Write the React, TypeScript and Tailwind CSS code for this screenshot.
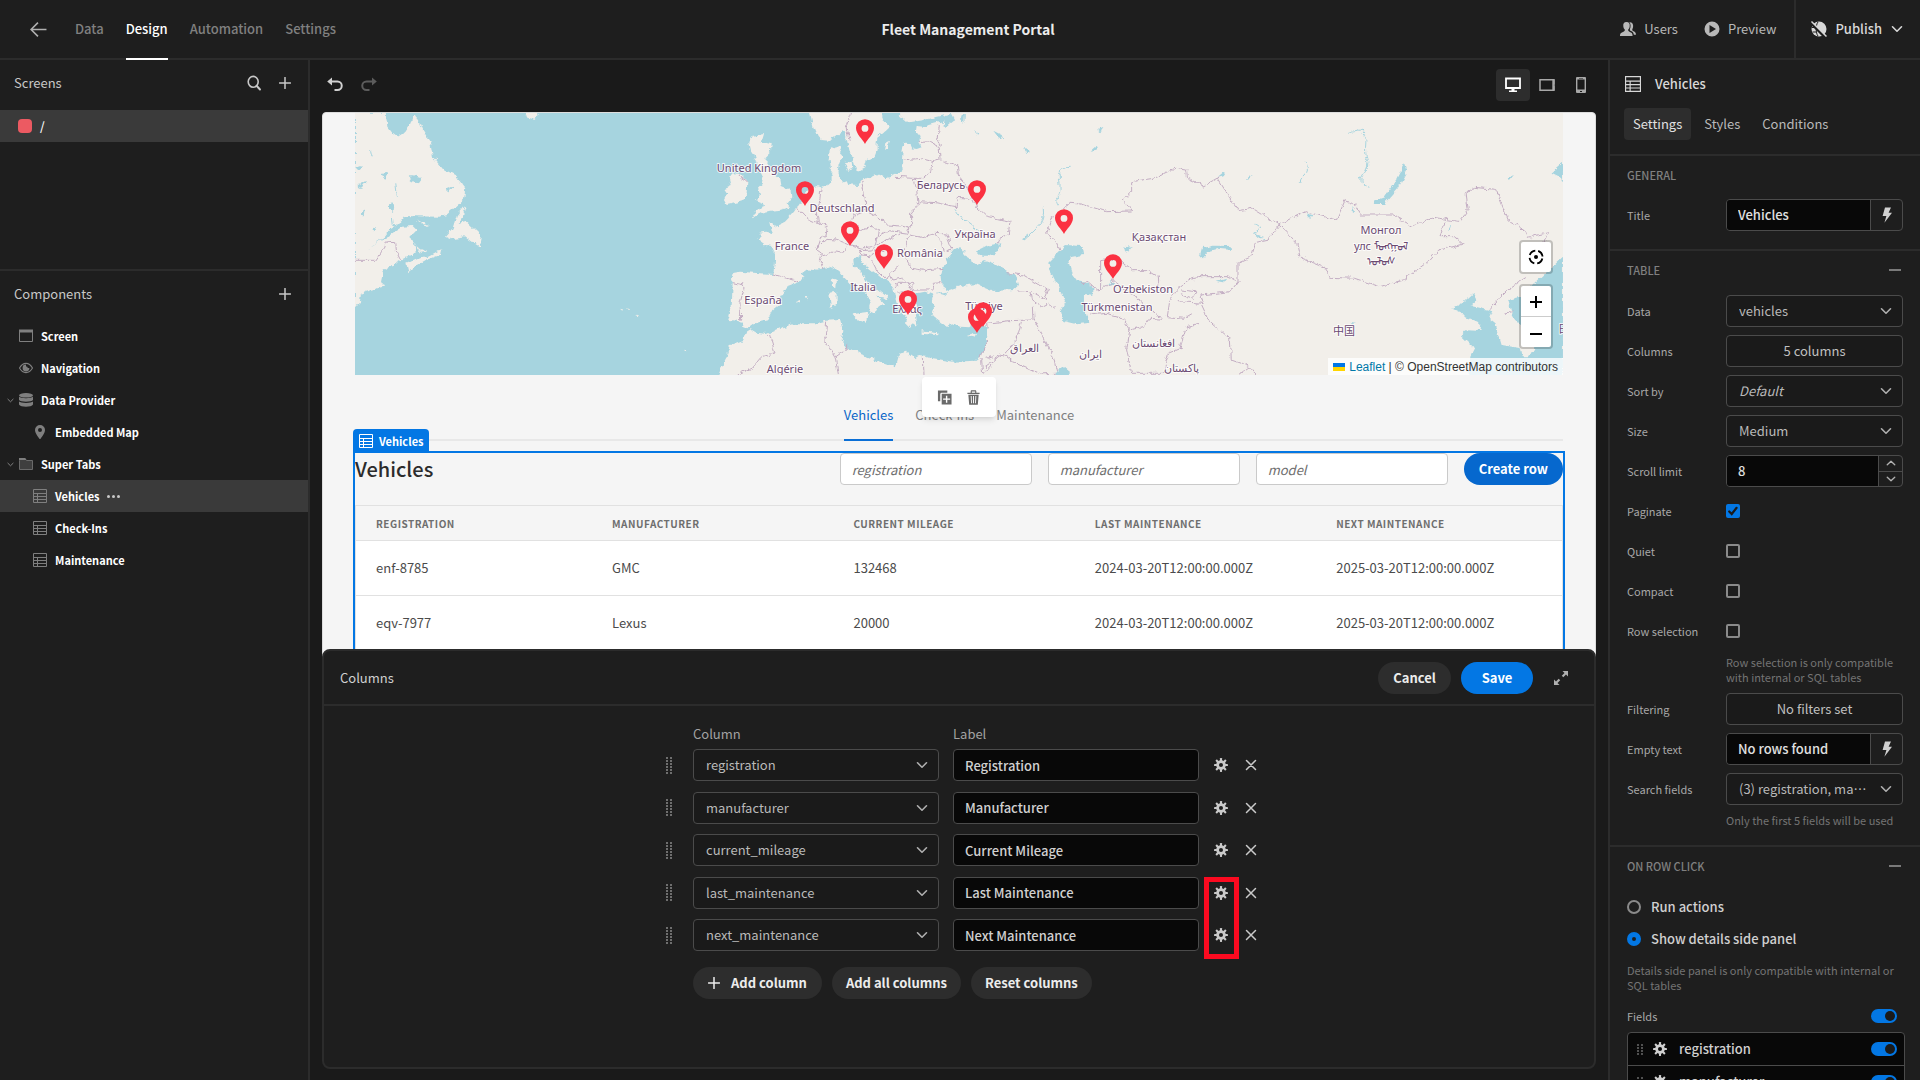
import { useState } from "react";
import type { ReactNode } from "react";
import clsx from "clsx";

interface IconProps {
  className?: string;
}

function Svg({ className, children, box = 16 }: IconProps & { children: ReactNode; box?: number }) {
  return (
    <svg viewBox={`0 0 ${box} ${box}`} className={clsx("shrink-0", className)} fill="currentColor" aria-hidden="true">
      {children}
    </svg>
  );
}

const stroke = { fill: "none", stroke: "currentColor" };

function ArrowLeftIcon({ className }: IconProps) {
  return (
    <Svg className={className}>
      <path d="M15.5 8H1.2M7.5 1.5L1 8l6.5 6.5" {...stroke} strokeWidth={1.5} />
    </Svg>
  );
}

function SearchIcon({ className }: IconProps) {
  return (
    <Svg className={className}>
      <ellipse cx={7.2} cy={6.8} rx={5} ry={5.4} {...stroke} strokeWidth={1.6} />
      <path d="M10.8 11L14 14.5" {...stroke} strokeWidth={2} strokeLinecap="round" />
    </Svg>
  );
}

function PlusIcon({ className }: IconProps) {
  return (
    <Svg className={className} box={12}>
      <path d="M6 0.5V11.5M0.5 6H11.5" {...stroke} strokeWidth={1.5} strokeLinecap="round" />
    </Svg>
  );
}

function ChevronIcon({ className }: IconProps) {
  return (
    <Svg className={className} box={12}>
      <path d="M1.5 3.8L6 8.2L10.5 3.8" {...stroke} strokeWidth={1.6} strokeLinecap="round" strokeLinejoin="round" />
    </Svg>
  );
}

function TableIcon({ className }: IconProps) {
  return (
    <Svg className={className} box={14}>
      <path d="M0.5 0.5H13.5V13.5H0.5ZM0.5 4.5H13.5M0.5 7.5H13.5M0.5 10.5H13.5M4.5 4.5V13.5" {...stroke} />
    </Svg>
  );
}

function ScreenIcon({ className }: IconProps) {
  return (
    <Svg className={className} box={14}>
      <path d="M0.5 1.5H13.5V12.5H0.5Z" {...stroke} />
      <path d="M0 0.5H14V3.5H0Z" />
    </Svg>
  );
}

function EyeIcon({ className }: IconProps) {
  return (
    <Svg className={className} box={14}>
      <path d="M0.5 7C2.5 3.5 4.6 2.4 7 2.4S11.5 3.5 13.5 7C11.5 10.5 9.4 11.6 7 11.6S2.5 10.5 0.5 7Z" {...stroke} strokeWidth={1.2} />
      <path d="M7 3.6A3.4 3.4 0 1 0 10.4 7H8.6A1.6 1.6 0 0 1 7 5.4Z" />
      <circle cx={7.6} cy={6.4} r={1} />
    </Svg>
  );
}

function DataIcon({ className }: IconProps) {
  return (
    <Svg className={className} box={14}>
      <ellipse cx={7} cy={2.3} rx={7} ry={2.3} />
      <path d="M0 3.8C1.5 5.6 12.5 5.6 14 3.8V7C12.5 9.2 1.5 9.2 0 7Z" />
      <path d="M0 8.6C1.5 10.4 12.5 10.4 14 8.6V11.6C12.5 14.6 1.5 14.6 0 11.6Z" />
    </Svg>
  );
}

function PinIcon({ className }: IconProps) {
  return (
    <Svg className={className} box={14}>
      <path fillRule="evenodd" d="M7 0A5 5 0 0 0 2 5C2 8.5 7 14.5 7 14.5S12 8.5 12 5A5 5 0 0 0 7 0ZM7 3A2 2 0 1 1 7 7A2 2 0 1 1 7 3Z" />
    </Svg>
  );
}

function FolderIcon({ className }: IconProps) {
  return (
    <Svg className={className} box={14}>
      <path d="M0.5 3.5V1.5H6L7.5 3.5H13.5V12.5H0.5Z" fill="#3f3f3f" stroke="#6a6a6a" />
      <path d="M0 1H6.2L7.4 3H0Z" />
    </Svg>
  );
}

function GearIcon({ className }: IconProps) {
  return (
    <Svg className={className}>
      <circle cx={8} cy={8} r={3.9} {...stroke} strokeWidth={3.2} />
      {[0, 45, 90, 135].map((angle) => (
        <g key={angle} transform={`rotate(${angle} 8 8)`}>
          <rect x={6.8} y={0} width={2.4} height={3.5} rx={0.5} />
          <rect x={6.8} y={12.5} width={2.4} height={3.5} rx={0.5} />
        </g>
      ))}
    </Svg>
  );
}

function CrossIcon({ className }: IconProps) {
  return (
    <Svg className={className} box={12}>
      <path d="M1.5 1.5L10.5 10.5M10.5 1.5L1.5 10.5" {...stroke} strokeWidth={1.5} strokeLinecap="round" />
    </Svg>
  );
}

function BoltIcon({ className }: IconProps) {
  return (
    <Svg className={className}>
      <path d="M6 0.5H12L9.6 5.8H13L5.4 15.8L7.4 9H3.6Z" />
    </Svg>
  );
}

function UsersIcon({ className }: IconProps) {
  return (
    <Svg className={className}>
      <path d="M6.5 1C3.8 1 3 3 3.3 5.2C3.5 7 4.2 8 4.8 8.6C5 9.8 4.6 10.2 3.5 10.7C1.5 11.6 0 12 0 15H12.6C12.6 12 11.5 11.6 9.5 10.7C8.4 10.2 8 9.8 8.2 8.6C8.8 8 9.5 7 9.7 5.2C10 3 9.2 1 6.5 1Z" />
      <path d="M9.3 1.3C10.8 2.6 11 5.6 9.9 8.2C9.7 9.2 10.2 9.7 11 10.1C12.6 10.8 13.6 11.8 13.9 13.8H16C15.9 11.5 14.8 10.8 13 10C12.3 9.6 12.1 9 12.4 8.1C13.7 6 13.8 0.8 9.3 1.3Z" />
    </Svg>
  );
}

function PlayIcon({ className }: IconProps) {
  return (
    <Svg className={className}>
      <path fillRule="evenodd" d="M8 0.5A7.5 7.5 0 1 0 8 15.5A7.5 7.5 0 1 0 8 0.5ZM5.5 4L12 8L5.5 12Z" />
    </Svg>
  );
}

function GlobeStrikeIcon({ className }: IconProps) {
  return (
    <Svg className={className} box={18}>
      <circle cx={9} cy={9} r={7.5} />
      <path d="M8 2C5.6 5 5.6 13 8 16M2 7.5H5M2.5 12H6" fill="none" stroke="#1e1e1e" />
      <path d="M0.5 2.5L15.5 17.5" stroke="#1e1e1e" strokeWidth={3} />
      <path d="M1.5 1.5L16.5 16.5" stroke="currentColor" strokeWidth={1.5} />
    </Svg>
  );
}

function UndoIcon({ className }: IconProps) {
  return (
    <Svg className={className}>
      <path d="M3.5 4.5H10.5A4.2 4.2 0 0 1 10.5 13H7.5" {...stroke} strokeWidth={2} />
      <path d="M0.2 4.5L5 0.5V8.5Z" />
    </Svg>
  );
}

function DesktopIcon({ className }: IconProps) {
  return (
    <Svg className={className}>
      <path d="M1 1.5H15V11H1Z" {...stroke} strokeWidth={1.8} />
      <path d="M6.5 11.5H9.5V13.5H12V15H4V13.5H6.5Z" />
    </Svg>
  );
}

function TabletIcon({ className }: IconProps) {
  return (
    <Svg className={className}>
      <path d="M1 2.7H15V13.3H1Z" {...stroke} strokeWidth={1.5} />
      <path d="M13.3 3H15.5V7A1.2 1.2 0 0 0 15.5 9.2V13H13.3Z" />
    </Svg>
  );
}

function PhoneIcon({ className }: IconProps) {
  return (
    <Svg className={className}>
      <path fillRule="evenodd" d="M4 0H12A1 1 0 0 1 13 1V15A1 1 0 0 1 12 16H4A1 1 0 0 1 3 15V1A1 1 0 0 1 4 0ZM4.4 2.5V12.5H11.6V2.5ZM7 14H9V15H7ZM6 1H10V1.5H6Z" />
    </Svg>
  );
}

function DuplicateIcon({ className }: IconProps) {
  return (
    <Svg className={className}>
      <path d="M1 0.5H11V3H5A1.5 1.5 0 0 0 3.5 4.5V12H1Z" />
      <path fillRule="evenodd" d="M5 4H15.5V15.5H5ZM9.5 6V9H6.5V10.5H9.5V13.5H11V10.5H14V9H11V6Z" />
    </Svg>
  );
}

function TrashIcon({ className }: IconProps) {
  return (
    <Svg className={className}>
      <path d="M1.5 3H5V1.5C5 0.7 5.5 0.3 6 0.3H10C10.5 0.3 11 0.7 11 1.5V3H14.5V4.2H1.5ZM6.2 1.5V3H9.8V1.5Z" fillRule="evenodd" />
      <path fillRule="evenodd" d="M2.5 5H13.5L12.6 15.7H3.4ZM5 6.5L5.4 14H6.3L6 6.5ZM7.5 6.5V14H8.5V6.5ZM10 6.5L9.7 14H10.6L11 6.5Z" />
    </Svg>
  );
}

function ExpandIcon({ className }: IconProps) {
  return (
    <Svg className={className} box={14}>
      <path d="M8.5 0H14V5.500L12 3.500L9.300 6.200L7.800 4.700L10.500 2ZM5.500 14H0V8.500L2 10.500L4.700 7.800L6.200 9.300L3.500 12Z" />
    </Svg>
  );
}

function HandleIcon({ className, rows = 6 }: IconProps & { rows?: number }) {
  return (
    <div className={clsx("grid grid-cols-2 gap-x-[2px] gap-y-[1px]", className)} aria-hidden="true">
      {Array.from({ length: rows * 2 }, (_, i) => (
        <span key={i} className="size-[2px] rounded-[1px] bg-current" />
      ))}
    </div>
  );
}

// ---------------------------------------------------------------- top bar

const NAV = ["Data", "Design", "Automation", "Settings"];

function TopBar() {
  return (
    <header className="relative flex h-[60px] shrink-0 items-stretch border-b-2 border-[#2c2c2c] bg-[#1e1e1e]">
      <a href="#back" aria-label="Back to apps" className="flex items-center pr-7 pl-[30px] text-[#b0b0b0]">
        <ArrowLeftIcon className="size-[17px]" />
      </a>
      <nav className="flex gap-[22px]">
        {NAV.map((item) => (
          <a
            key={item}
            href={`#${item.toLowerCase()}`}
            className={clsx(
              "-mb-[2px] flex items-center border-b-2 text-[13px] font-medium",
              item === "Design" ? "border-white font-bold text-white" : "border-transparent text-[#808080]"
            )}
          >
            {item}
          </a>
        ))}
      </nav>
      <h1 className="pointer-events-none absolute inset-0 flex items-center justify-center pl-4 text-[14px] font-bold text-[#ececec]">
        Fleet Management Portal
      </h1>
      <div className="ml-auto flex items-stretch text-[13px] text-[#b8b8b8]">
        <button type="button" className="flex items-center gap-2 pr-[26px]">
          <UsersIcon className="size-4" />
          Users
        </button>
        <button type="button" className="flex items-center gap-2 pr-[18px]">
          <PlayIcon className="size-4" />
          Preview
        </button>
        <button type="button" className="flex items-center gap-[7px] border-l-2 border-[#2c2c2c] pr-[17px] pl-[14px] font-medium text-[#d8d8d8]">
          <GlobeStrikeIcon className="size-[18px]" />
          Publish
          <ChevronIcon className="ml-[2px] size-3" />
        </button>
      </div>
    </header>
  );
}

// ---------------------------------------------------------------- left panel

interface TreeItem {
  name: string;
  icon: (props: IconProps) => ReactNode;
  nested?: boolean;
  open?: boolean;
}

const TREE: TreeItem[] = [
  { name: "Screen", icon: ScreenIcon },
  { name: "Navigation", icon: EyeIcon },
  { name: "Data Provider", icon: DataIcon, open: true },
  { name: "Embedded Map", icon: PinIcon, nested: true },
  { name: "Super Tabs", icon: FolderIcon, open: true },
  { name: "Vehicles", icon: TableIcon, nested: true },
  { name: "Check-Ins", icon: TableIcon, nested: true },
  { name: "Maintenance", icon: TableIcon, nested: true },
];

function LeftPanel() {
  const [selected, setSelected] = useState("Vehicles");

  return (
    <aside className="flex w-[310px] shrink-0 flex-col border-r-2 border-[#2c2c2c] bg-[#1e1e1e]">
      <section className="h-[211px] shrink-0 border-b-2 border-[#2c2c2c]">
        <div className="mb-1 flex h-[46px] items-center pr-[17px] pl-[14px] text-[#c8c8c8]">
          <h2 className="flex-1 text-[13px] leading-5">Screens</h2>
          <button type="button" aria-label="Search screens" className="mr-[17px]">
            <SearchIcon className="size-4" />
          </button>
          <button type="button" aria-label="Add screen">
            <PlusIcon className="size-3" />
          </button>
        </div>
        <button type="button" className="flex h-8 w-full items-center gap-2 bg-[#3a3a3a] pl-[18px] text-xs font-medium text-white">
          <span className="size-[14px] rounded bg-[#ec5a62]" />/
        </button>
      </section>
      <section className="flex flex-col">
        <div className="mb-1 flex h-[45px] items-center pr-[17px] pl-[14px] text-[#c8c8c8]">
          <h2 className="flex-1 text-[13px] leading-5">Components</h2>
          <button type="button" aria-label="Add component">
            <PlusIcon className="size-3" />
          </button>
        </div>
        <ul>
          {TREE.map(({ name, icon: Icon, nested, open }) => (
            <li key={name} className={clsx("flex h-8 items-center", name === selected && "bg-[#3a3a3a]")}>
              <button
                type="button"
                onClick={() => setSelected(name)}
                className={clsx("flex h-full items-center text-[11px] font-bold text-white", nested ? "pl-[33px]" : "pl-[5px]")}
              >
                {!nested && (
                  <span className="flex w-[14px] text-[#8a8a8a]">{open && <ChevronIcon className="ml-[2px] size-[7px]" />}</span>
                )}
                <Icon className="size-[14px] text-[#7f7f7f]" />
                <span className="pl-2">{name}</span>
              </button>
              {name === selected && (
                <button type="button" aria-label="More actions" className="ml-2 flex gap-[2px] text-[#c8c8c8]">
                  <span className="size-[3px] rounded-full bg-current" />
                  <span className="size-[3px] rounded-full bg-current" />
                  <span className="size-[3px] rounded-full bg-current" />
                </button>
              )}
            </li>
          ))}
        </ul>
      </section>
    </aside>
  );
}

// ---------------------------------------------------------------- map

const CANADA = [
  "M83,38L156,38 160,80 172,100 185,112 200,100 215,70 222,40 235,60 245,90 262,125 268,170 290,205 320,225 345,265 343,295 325,318 300,345 285,350 200,348 190,365 165,385 145,420 112,450 165,405 195,380 220,378 230,390 215,410 222,430 230,455 210,470 190,482 150,515 145,545 152,560 110,575 97,582 95,605 83,622Z",
  "M345,315L325,345 315,385 297,410 310,418 345,412 360,425 380,440 384,415 375,395 350,365 332,372Z",
  "M228,358L262,380 245,374Z",
  "M205,490L232,474 262,466 288,448 285,465 250,482 225,500 210,517Z",
  "M225,430L240,448 255,455 240,458Z",
  "M485,38L515,38 510,60 490,52Z",
];

const EURASIA =
  "M690,0L665,35 640,42 610,50 590,48 588,62 602,78 598,95 605,115 590,120 578,118 570,100 555,98 548,120 546,150 548,180 530,192 500,205 470,192 440,205 430,208 410,225 385,222 380,210 365,215 352,190 335,190 335,215 325,225 300,232 290,228 260,240 250,265 232,290 222,305 205,325 195,335 175,345 165,350 160,338 148,340 155,370 140,365 118,368 125,380 112,385 140,405 155,408 165,430 165,455 160,492 120,490 60,485 35,490 30,510 38,520 35,590 25,630 55,632 68,648 85,655 105,640 145,630 160,600 185,580 180,560 200,530 240,515 250,500 245,490 262,478 290,482 310,478 335,468 355,480 370,500 390,520 410,535 440,550 455,575 447,605 465,610 475,590 490,580 485,570 470,560 490,562 502,570 500,560 470,535 450,520 440,510 428,490 402,470 400,445 418,438 430,460 455,480 480,500 505,515 520,535 525,560 530,580 545,605 560,625 555,640 570,655 578,640 590,648 585,620 600,600 590,580 575,562 580,552 600,548 615,545 640,555 635,575 645,590 640,620 660,635 680,650 700,640 720,650 745,652 770,632 785,640 800,650 798,690 790,720 780,745 770,752 700,755 640,745 620,738 600,735 585,745 560,725 535,735 525,770 480,755 440,740 410,720 385,718 365,690 370,665 360,630 320,632 290,640 230,640 180,655 140,672 110,668 92,658 80,665 70,690 30,705 18,745 0,780 -12,810L3300,810 3300,0Z";

const ISLANDS = [
  "M268,0L280,50 290,75 305,90 325,92 345,82 360,68 372,62 378,75 382,95 388,120 395,140 403,158 408,178 416,182 436,172 440,150 462,142 470,120 470,95 472,80 495,62 510,48 490,30 478,0Z",
  "M545,0L536,16 560,38 610,30 690,12 690,0Z",
  "M330,112L345,115 352,106 362,108 366,118 360,130 368,140 362,150 356,165 352,192 340,192 330,178 326,150Z",
  "M375,160L398,155 400,180 385,185Z",
  "M95,78L132,72 125,95 152,102 150,125 130,145 145,160 160,190 178,205 182,228 212,240 214,262 200,280 210,290 180,300 150,302 125,308 95,325 110,300 135,290 130,280 105,270 120,255 115,235 125,225 130,200 120,180 118,160 105,150 100,135 90,120 85,100Z",
  "M40,190L60,192 82,215 80,250 65,275 20,285 12,270 22,250 12,235 35,225 30,205Z",
  "M398,612L445,606 438,638 415,630Z",
  "M328,548L350,545 350,585 332,590Z",
  "M335,512L348,505 346,535 336,530Z",
  "M605,664L655,670 655,676 605,671Z",
  "M740,678L772,668 762,682Z",
  "M495,120L500,98 510,92 502,115Z",
  "M225,576L240,570 243,578 232,582ZM255,562L265,560 262,568Z",
];

const INLAND_SEAS = [
  "M720,415L702,420 685,440 672,465 662,500 665,525 685,540 720,528 770,522 820,543 880,540 897,525 890,500 860,485 820,460 795,450 775,462 755,450 745,440 730,432 735,420Z",
  "M770,425L810,405 845,400 835,425 805,440 785,440Z",
  "M1010,430L1035,405 1085,408 1090,435 1060,440 1045,455 1055,490 1070,510 1095,515 1120,535 1120,555 1095,552 1095,590 1108,635 1070,640 1030,630 1022,600 1035,575 1015,530 990,480 985,455Z",
  "M1010,785L1030,772 1050,788 1050,800 1010,800Z",
  "M650,548L685,545 675,556Z",
  "M672,15L695,12 705,30 680,50 668,45Z",
  "M720,20L735,15 733,38 722,35ZM820,62L845,75 850,88 835,82Z",
  "M1160,525L1172,510 1180,522Z",
  "M1210,412L1235,408 1220,428Z",
  "M905,385L925,370 918,388Z",
  "M765,60L775,72 768,75ZM915,112L926,120 922,135ZM1135,62L1150,48 1142,70Z",
  "M1112,125L1135,105 1130,122Z",
];

const RIVERS = [
  "M1055,172Q1012,170 1018,205T1015,260Q1005,270 1016,285",
  "M970,290Q975,330 950,355T920,385",
  "M705,295Q730,340 778,360",
];

const EAST_WATER = [
  "M1105,192L1110,212 1090,262 1055,312 1028,312 1032,302 1055,292 1085,240Z",
  "M617,470L622,445 650,437 690,438 695,450 660,446 635,455 622,475Z",
  "M1215,625L1245,605 1268,578 1277,600 1262,618 1312,633 1305,655 1320,670 1335,735 1380,745 1385,772 1400,772 1412,745 1395,700 1360,650 1350,600 1380,590 1430,530 1480,470 1480,830 1255,830 1260,770 1270,745 1237,705 1250,688 1290,690 1275,668 1250,655 1240,640Z",
  "M1453,218L1480,188 1480,250 1475,232Z",
  "M1348,232L1366,222 1352,242Z",
  "M972,665L988,668 980,672Z",
  "M655,545L680,536 672,550Z",
  "M660,230L675,215 678,225ZM725,240L748,222 735,238ZM748,400L768,408 758,412Z",
  "M870,340L885,345 878,356ZM980,318L986,330 981,342ZM1207,390L1215,374 1212,388Z",
];

const EAST_RIVERS = [
  "M970,100Q1015,80 1012,120T1015,180T1005,225T1020,262",
  "M870,188Q878,215 865,228T858,248",
  "M745,370L762,385 745,400 770,420",
];

const BORDERS = [
  "M398,0L378,50 388,95",
  "M55,190L62,205 80,215",
  "M38,518L70,525 72,535 60,580 62,632",
  "M158,492L200,505 238,515",
  "M230,292L262,325 290,338 322,350 318,375 300,385 288,420 305,432 300,455 312,480",
  "M303,232L298,285 288,300 292,340",
  "M425,215L435,260 438,300 400,315 395,330 410,345 420,360",
  "M438,300L470,318 500,345 545,348 570,355",
  "M420,360L445,352 475,355 472,380 465,405 430,415 395,405 350,390 318,388 300,405",
  "M475,380L510,362 565,370 572,345 572,310 595,285 590,240 582,205 525,202",
  "M465,405L500,390 540,372",
  "M548,150L600,145 640,155 660,150 658,110 630,95 600,98",
  "M658,45L655,85 664,108",
  "M664,150L712,168 715,195 742,232 770,290 800,318 870,335 865,375 838,385 835,400",
  "M640,155L635,185 610,205 582,205",
  "M590,275L650,278 708,290 712,265 750,268",
  "M570,375L605,382 645,370 680,372 690,400 698,420 680,425",
  "M645,372L665,400 670,425",
  "M565,378L550,420 560,450 575,475 620,482 675,478",
  "M465,410L455,420 420,422 418,438 450,440 465,420 490,425",
  "M455,450L470,480 500,508 510,490 535,470",
  "M510,490L520,510 545,505 560,515 575,540 635,540 640,520 662,518",
  "M525,530L540,520 575,520 578,545 540,550 530,545",
  "M305,430L320,440 340,425 365,430 380,408",
  "M860,488L910,495 985,540 975,570 930,545 895,543",
  "M930,545L935,570 965,590 985,580 1005,595",
  "M940,590L942,625 970,680 1000,740 1010,785",
  "M802,655L800,640 870,632 942,630",
  "M905,632L890,690 850,732 795,770",
  "M850,732L880,755 960,792 1010,790",
  "M780,745L800,690M785,748L788,795 800,780 832,745 825,738 800,745",
  "M148,672L165,728 125,740 100,770 50,795",
  "M320,635L315,690 345,740 355,795M345,740L380,715 380,700",
  "M610,740L612,795",
  "M1030,300L1050,280 1085,282 1160,305 1235,303 1210,270 1235,245 1235,215 1300,205 1365,175 1400,180 1402,205 1450,228 1500,200",
  "M1020,418L1010,395 980,370 1000,315",
  "M1083,518L1100,515 1130,540 1142,538 1142,452 1155,450",
  "M1160,450L1195,445 1240,482 1285,482 1315,500 1318,530 1345,548",
  "M1142,538L1160,530 1180,510 1215,540 1250,560 1300,605 1330,625",
  "M1108,615L1160,610 1200,620 1230,660 1270,650 1290,625 1330,628",
  "M1230,660L1220,720 1235,790 1330,790 1345,730 1380,715 1400,650 1440,640",
];

const EAST_BORDERS = [
  "M658,232L708,332 740,325 805,375 868,335 942,360 962,302 985,315 1000,345 1075,345 1120,378 1172,352 1235,365 1255,330 1250,280 1270,262 1320,268 1350,360 1385,385 1395,412 1448,398 1430,440",
  "M808,375L848,430 855,472 910,500 928,532 985,535 1045,560 1100,540 1165,480 1185,450 1243,433 1222,410 1188,410 1200,365",
  "M805,375L780,420 750,428 740,470 708,488 708,545 680,530 620,530 590,540 560,575 545,610 540,650 580,655 600,640",
  "M708,545L690,575 620,585 625,610 565,605",
  "M575,570L610,575 600,595 570,580",
  "M620,610L640,665 690,720 692,780 735,800 752,825",
  "M708,825L735,800",
  "M1305,628L1345,572 1395,530M1340,640L1358,635",
];

const LABELS: [string, number, number][] = [
  ["United Kingdom", 404, 59],
  ["Deutschland", 487, 99],
  ["France", 437, 137],
  ["España", 408, 191],
  ["Italia", 508, 178],
  ["Ελλάς", 552, 200],
  ["Algérie", 430, 260],
  ["Беларусь", 586, 76],
  ["Україна", 620, 125],
  ["România", 565, 144],
  ["Türkiye", 629, 197],
  ["Қазақстан", 804, 128],
  ["Oʻzbekiston", 788, 180],
  ["Türkmenistan", 762, 198],
  ["العراق", 669, 239],
  ["ایران", 735, 245],
  ["افغانستان", 798, 234],
  ["پاکستان", 826, 259],
  ["Монгол", 1026, 121],
  ["улс ᠮᠣᠩᠭᠣᠯ", 1026, 137],
  ["ᠤᠯᠤᠰ", 1026, 152],
  ["中国", 989, 222],
  ["日本", 1214, 220],
];

const MARKERS: [number, number][] = [
  [510, 31],
  [450, 93],
  [495, 133],
  [529, 156],
  [553, 202],
  [622, 92],
  [709, 121],
  [758, 166],
  [628, 214],
  [622, 220],
];

const EUROPE_GRID = "translate(365 -3) scale(0.3333)";
const WEST_GRID = "translate(-35 -13) scale(0.4209 0.3333)";
const EAST_GRID = "translate(585 -13) scale(0.4209 0.3333)";

function Paths({ list, ...rest }: { list: string[]; fill?: string; stroke?: string; strokeWidth?: number }) {
  return (
    <g {...rest}>
      {list.map((d) => (
        <path key={d} d={d} vectorEffect="non-scaling-stroke" />
      ))}
    </g>
  );
}

function MapView() {
  return (
    <div className="relative h-[262px] overflow-hidden bg-[#a6d4df]">
      <svg
        viewBox="0 0 1208 262"
        preserveAspectRatio="xMidYMid slice"
        className="absolute inset-0 size-full"
        role="img"
        aria-label="Map of vehicle locations"
      >
        <defs>
          <filter id="coast" x="0" y="0" width="100%" height="100%">
            <feTurbulence type="fractalNoise" baseFrequency="0.15" numOctaves={3} seed={4} />
            <feDisplacementMap in="SourceGraphic" scale={6} xChannelSelector="R" yChannelSelector="G" />
          </filter>
        </defs>
        <g filter="url(#coast)">
          <rect x={-20} y={-20} width={1250} height={300} fill="#a6d4df" />
          <g transform={WEST_GRID}>
            <Paths list={CANADA} fill="#f2efea" />
            <Paths
              list={[
                "M150,220L160,215 155,235ZM215,230L240,235 235,245 218,242ZM90,260L110,245 98,262ZM165,310Q175,305 175,325T163,320M100,340L108,325 105,345ZM125,385L132,388 128,392ZM300,270L318,262 305,275ZM85,205L98,200 92,212ZM180,250L184,290M172,350L174,375M120,150L124,172",
                "M680,608L682,610M710,626L718,630M728,626L732,628M752,644L758,648M866,750L872,752",
              ]}
              fill="#a6d4df"
              stroke="#a6d4df"
            />
            <Paths list={["M712,628L720,630M730,627L734,628M750,645L757,647M866,751L872,752"]} stroke="#f2efea" />
            <Paths list={["M83,481L132,481 148,452 155,426 180,428 182,460 190,480"]} fill="none" stroke="#c3adc3" />
          </g>
          <g transform={EUROPE_GRID}>
            <path d={EURASIA} fill="#f2efea" />
            <Paths list={ISLANDS} fill="#f2efea" />
            <Paths list={INLAND_SEAS} fill="#a6d4df" />
            <Paths list={RIVERS} fill="none" stroke="#a6d4df" />
            <Paths list={BORDERS} fill="none" stroke="#c3adc3" />
          </g>
          <g transform={EAST_GRID}>
            <Paths list={EAST_WATER} fill="#a6d4df" />
            <Paths list={EAST_RIVERS} fill="none" stroke="#a6d4df" />
            <Paths list={EAST_BORDERS} fill="none" stroke="#c3adc3" />
          </g>
        </g>
        <g
          className="font-['Noto_Sans','Noto_Sans_CJK_SC',sans-serif] text-[11px]"
          textAnchor="middle"
          fill="#6b4a72"
          stroke="#ffffff"
          strokeOpacity={0.8}
          strokeWidth={2}
          paintOrder="stroke"
          strokeLinejoin="round"
        >
          {LABELS.map(([name, x, y]) => (
            <text key={name} x={x} y={y}>
              {name}
            </text>
          ))}
        </g>
        {MARKERS.map(([x, y]) => (
          <path
            key={`${x}-${y}`}
            transform={`translate(${x} ${y})`}
            fillRule="evenodd"
            fill="#fb3141"
            d="M0,0C-2.5,-5 -9,-10 -9,-16A9,8.8 0 0 1 9,-16C9,-10 2.5,-5 0,0ZM0,-19A3.4,3.4 0 1 0 0,-12.2A3.4,3.4 0 1 0 0,-19Z"
          />
        ))}
      </svg>
      <div className="absolute top-[127px] right-[10px] flex flex-col gap-[10px] text-black">
        <button
          type="button"
          aria-label="Show my location"
          className="flex size-[34px] items-center justify-center rounded border-2 border-black/20 bg-white bg-clip-padding"
        >
          <svg viewBox="0 0 16 16" className="size-4" fill="none" stroke="currentColor" strokeWidth={1.8} aria-hidden="true">
            <circle cx={8} cy={8} r={6.5} strokeDasharray="7.2 3" strokeDashoffset={-1.5} />
            <circle cx={8} cy={8} r={2} fill="currentColor" stroke="none" />
          </svg>
        </button>
        <div className="flex w-[34px] flex-col rounded border-2 border-black/20 bg-white bg-clip-padding">
          <button type="button" aria-label="Zoom in" className="flex h-[31px] items-center justify-center border-b border-[#cccccc] pt-[2px]">
            <svg viewBox="0 0 12 12" className="size-3" stroke="currentColor" strokeWidth={2} aria-hidden="true">
              <path d="M6 0V12M0 6H12" />
            </svg>
          </button>
          <button type="button" aria-label="Zoom out" className="flex h-[30px] items-center justify-center pt-1">
            <span className="h-[2px] w-3 bg-black" />
          </button>
        </div>
      </div>
      <div className="absolute right-0 bottom-0 flex h-[17px] items-center bg-white/80 px-[5px] font-['Liberation_Sans',sans-serif] text-xs text-[#333333]">
        <span className="mr-1 flex h-2 w-3 flex-col">
          <span className="h-1 bg-[#0077e6]" />
          <span className="h-1 bg-[#ffd500]" />
        </span>
        <a href="#leaflet" className="text-[#0078a8]">
          Leaflet
        </a>
        <span className="whitespace-pre"> | © OpenStreetMap contributors</span>
      </div>
    </div>
  );
}

// ---------------------------------------------------------------- app preview

const HEADINGS = ["Registration", "Manufacturer", "Current Mileage", "Last Maintenance", "Next Maintenance"];

const VEHICLES = [
  ["enf-8785", "GMC", "132468", "2024-03-20T12:00:00.000Z", "2025-03-20T12:00:00.000Z"],
  ["eqv-7977", "Lexus", "20000", "2024-03-20T12:00:00.000Z", "2025-03-20T12:00:00.000Z"],
];

function AppPreview() {
  return (
    <div className="h-[calc(100%-16px)] overflow-hidden rounded border border-[#dddddd] bg-[#f5f5f5] px-8">
      <MapView />
      <div className="relative mt-3 flex h-[54px] justify-center gap-[22px] border-b-2 border-[#e8e8e8] text-[13px] text-[#808080] *:pt-1">
        <button type="button" className="-mb-[2px] border-b-2 border-[#0b6fd6] text-[#0a66c8]">
          Vehicles
        </button>
        <button type="button">Check-Ins</button>
        <button type="button">Maintenance</button>
        <div className="absolute -top-[10px] left-[567px] flex h-10 w-[74px] items-center justify-center gap-[14px] rounded bg-white pb-1 text-[#6a6a6a] shadow-md">
          <button type="button" aria-label="Duplicate">
            <DuplicateIcon className="size-[15px]" />
          </button>
          <button type="button" aria-label="Delete">
            <TrashIcon className="size-[15px]" />
          </button>
        </div>
      </div>
      <section className="relative mt-3 outline-2 outline-[#0377e4]">
        <div className="absolute -top-6 -left-[2px] flex h-6 items-center gap-[6px] rounded-t bg-[#0377e4] px-[6px] text-[11px] font-bold text-white">
          <TableIcon className="size-[14px]" />
          Vehicles
        </div>
        <div className="flex h-[52px] items-start gap-4">
          <h2 className="flex-1 text-[20px] leading-8 font-medium text-[#2c2c2c]">Vehicles</h2>
          {["registration", "manufacturer", "model"].map((field) => (
            <input
              key={field}
              aria-label={field}
              placeholder={field}
              className="h-8 w-48 rounded border border-[#cacaca] bg-white px-[11px] text-[13px] placeholder:text-[#6e6e6e] placeholder:italic"
            />
          ))}
          <button type="button" className="h-8 rounded-full bg-[#0668ce] px-[15px] text-[13px] font-bold text-white">
            Create row
          </button>
        </div>
        <table className="w-full table-fixed border-collapse border border-[#e1e1e1] text-left">
          <thead>
            <tr className="h-[35px] border-b border-[#e1e1e1]">
              {HEADINGS.map((heading, i) => (
                <th
                  key={heading}
                  className={clsx("pl-5 text-[10px] font-bold tracking-wider text-[#6e6e6e] uppercase", i === 0 ? "w-[19.6%]" : i < 4 && "w-[20%]")}
                >
                  {heading}
                </th>
              ))}
            </tr>
          </thead>
          <tbody className="bg-white text-[13px] text-[#4b4b4b]">
            {VEHICLES.map((row) => (
              <tr key={row[0]} className="h-[55px] border-b border-[#e1e1e1]">
                {row.map((cell, i) => (
                  <td key={i} className="pl-5">
                    {cell}
                  </td>
                ))}
              </tr>
            ))}
          </tbody>
        </table>
      </section>
    </div>
  );
}

// ---------------------------------------------------------------- columns drawer

const COLUMNS = [
  ["registration", "Registration"],
  ["manufacturer", "Manufacturer"],
  ["current_mileage", "Current Mileage"],
  ["last_maintenance", "Last Maintenance"],
  ["next_maintenance", "Next Maintenance"],
];

function Select({ id, label, value, italic }: { id?: string; label?: string; value: string; italic?: boolean }) {
  return (
    <div className="relative min-w-0 flex-1">
      <select
        id={id}
        aria-label={label}
        defaultValue={value}
        className={clsx(
          "block h-8 w-full appearance-none truncate rounded border border-[#4b4b4b] bg-[#1a1a1a] pr-7 pl-3 text-[13px] text-[#b9b9b9]",
          italic && "italic"
        )}
      >
        <option>{value}</option>
      </select>
      <ChevronIcon className="pointer-events-none absolute top-[10px] right-[11px] size-3 text-[#b0b0b0]" />
    </div>
  );
}

const PILL = "flex h-8 items-center justify-center rounded-full bg-[#2d2d2d] text-[13px] font-bold text-[#ececec]";

function ColumnsDrawer() {
  return (
    <section className="absolute inset-x-0 bottom-0 flex h-[420px] flex-col rounded-lg border-2 border-[#2c2c2c] bg-[#1e1e1e]">
      <div className="flex h-[55px] shrink-0 items-center gap-[10px] border-b-2 border-[#2c2c2c] pr-[26px] pl-4">
        <h2 className="flex-1 text-[13px] text-[#d0d0d0]">Columns</h2>
        <button type="button" className={clsx(PILL, "w-[73px]")}>
          Cancel
        </button>
        <button type="button" className="h-8 w-[72px] rounded-full bg-[#0377e4] text-[13px] font-bold text-white">
          Save
        </button>
        <button type="button" aria-label="Expand" className="ml-[11px] text-[#b0b0b0]">
          <ExpandIcon className="size-[14px]" />
        </button>
      </div>
      <div className="mx-auto w-[600px] pt-[18px]">
        <div className="flex gap-[14px] pb-[5px] pl-[34px] text-[13px] leading-5 text-[#a2a2a2]">
          <span className="w-[246px]">Column</span>
          <span className="w-[246px]">Label</span>
        </div>
        <div className="relative flex h-[202px] flex-col justify-between">
          {COLUMNS.map(([column, label]) => (
            <div key={column} className="flex items-center gap-[14px]">
              <span className="flex w-5 justify-center text-[#8a8a8a]">
                <HandleIcon />
              </span>
              <Select label={`${label} column`} value={column} />
              <input
                aria-label={`${label} label`}
                defaultValue={label}
                className="h-8 w-[246px] shrink-0 rounded border border-[#4b4b4b] bg-[#080808] px-[11px] text-[13px] font-medium text-[#d0d0d0]"
              />
              <button type="button" aria-label={`${label} settings`} className="flex w-4 justify-center text-[#cacaca]">
                <GearIcon className="size-[14px]" />
              </button>
              <button type="button" aria-label={`Remove ${label}`} className="flex w-4 justify-center text-[#cacaca]">
                <CrossIcon className="size-3" />
              </button>
            </div>
          ))}
          <span className="pointer-events-none absolute right-5 -bottom-2 h-[82px] w-[35px] border-[5px] border-[#fb0a20]" />
        </div>
        <div className="flex gap-[10px] pt-4 pl-[34px]">
          <button type="button" className={clsx(PILL, "gap-[11px] px-[15px]")}>
            <PlusIcon className="size-3" />
            Add column
          </button>
          <button type="button" className={clsx(PILL, "px-[14px]")}>
            Add all columns
          </button>
          <button type="button" className={clsx(PILL, "px-[14px]")}>
            Reset columns
          </button>
        </div>
      </div>
    </section>
  );
}

function Canvas() {
  return (
    <main className="flex min-w-0 flex-1 flex-col bg-[#1a1a1a] pb-[11px]">
      <div className="flex h-[52px] shrink-0 items-center pr-[10px] pb-[2px] pl-2 *:flex *:h-8 *:w-[34px] *:items-center *:justify-center *:rounded">
        <button type="button" aria-label="Undo" className="text-[#d0d0d0]">
          <UndoIcon className="size-4" />
        </button>
        <button type="button" aria-label="Redo" className="mr-auto text-[#5c5c5c]">
          <UndoIcon className="size-4 -scale-x-100" />
        </button>
        <button type="button" aria-label="Desktop" className="bg-[#2d2d2d] text-white">
          <DesktopIcon className="size-4" />
        </button>
        <button type="button" aria-label="Tablet" className="text-[#a8a8a8]">
          <TabletIcon className="size-4" />
        </button>
        <button type="button" aria-label="Mobile" className="text-[#a8a8a8]">
          <PhoneIcon className="size-4" />
        </button>
      </div>
      <div className="relative mx-3 min-h-0 flex-1">
        <AppPreview />
        <ColumnsDrawer />
      </div>
    </main>
  );
}

// ---------------------------------------------------------------- right panel

function Row({ label, id, children }: { label: string; id: string; children: ReactNode }) {
  return (
    <div className="flex h-8 items-center">
      <label htmlFor={id} className="w-[99px] shrink-0 text-[11px] text-[#a8a8a8]">
        {label}
      </label>
      {children}
    </div>
  );
}

function Section({ title, collapsible, className, children }: { title: string; collapsible?: boolean; className?: string; children: ReactNode }) {
  return (
    <section className={clsx("border-t-2 border-[#2c2c2c] px-[17px]", className)}>
      <div className="flex h-[38px] items-center justify-between pr-[2px]">
        <h3 className="text-[11px] font-medium text-[#808080] uppercase">{title}</h3>
        {collapsible && (
          <button type="button" aria-label={`Collapse ${title}`} className="flex h-4 items-center">
            <span className="h-[2px] w-3 bg-[#7a7a7a]" />
          </button>
        )}
      </div>
      {children}
    </section>
  );
}

function BindableInput({ id, value }: { id: string; value: string }) {
  return (
    <div className="flex h-8 min-w-0 flex-1 overflow-hidden rounded border border-[#4b4b4b]">
      <input id={id} defaultValue={value} className="min-w-0 flex-1 bg-[#080808] px-[11px] text-[13px] font-medium text-[#e0e0e0]" />
      <button type="button" aria-label="Bind value" className="flex w-8 items-center justify-center border-l border-[#4b4b4b] text-[#d0d0d0]">
        <BoltIcon className="size-4" />
      </button>
    </div>
  );
}

function Checkbox({ id, checked }: { id: string; checked?: boolean }) {
  return (
    <span className="relative flex size-[14px]">
      <input
        id={id}
        type="checkbox"
        defaultChecked={checked}
        className="peer size-[14px] appearance-none rounded-[2px] border-2 border-[#8a8a8a] checked:border-[#0377e4] checked:bg-[#0377e4]"
      />
      <svg
        viewBox="0 0 14 14"
        className="pointer-events-none absolute inset-0 hidden peer-checked:block"
        fill="none"
        stroke="#1a1a1a"
        strokeWidth={2.2}
        strokeLinecap="round"
        aria-hidden="true"
      >
        <path d="M3.2 7.5L5.7 10L10.6 3.8" />
      </svg>
    </span>
  );
}

function Toggle({ label }: { label: string }) {
  return (
    <input
      type="checkbox"
      role="switch"
      aria-label={label}
      defaultChecked
      className="flex h-[14px] w-[26px] appearance-none items-center rounded-full bg-[#5c5c5c] px-[2px] before:size-[10px] before:rounded-full before:bg-[#1a1a1a] checked:justify-end checked:bg-[#0377e4]"
    />
  );
}

const OUTLINE_BUTTON = "h-8 flex-1 rounded border border-[#4b4b4b] bg-[#1a1a1a] text-[13px] text-[#c0c0c0]";

function RightPanel() {
  return (
    <aside className="w-[312px] shrink-0 overflow-hidden border-l-2 border-[#2c2c2c] bg-[#1e1e1e]">
      <div className="flex h-12 items-center gap-[14px] pl-[15px] text-[#d8d8d8]">
        <TableIcon className="size-4" />
        <h2 className="text-[13px] font-medium">Vehicles</h2>
      </div>
      <div className="flex gap-1 pb-[14px] pl-[14px] text-[13px] text-[#b9b9b9]">
        <button type="button" className="h-8 rounded bg-[#2d2d2d] px-[9px] text-[#e0e0e0]">
          Settings
        </button>
        <button type="button" className="h-8 px-[9px]">
          Styles
        </button>
        <button type="button" className="h-8 px-[9px]">
          Conditions
        </button>
      </div>
      <Section title="General" className="h-[95px]">
        <div className="pt-[5px]">
          <Row label="Title" id="title">
            <BindableInput id="title" value="Vehicles" />
          </Row>
        </div>
      </Section>
      <Section title="Table" collapsible className="pb-[17px]">
        <div className="flex flex-col gap-2 pt-[6px]">
          <Row label="Data" id="data">
            <Select id="data" value="vehicles" />
          </Row>
          <Row label="Columns" id="columns">
            <button type="button" id="columns" className={OUTLINE_BUTTON}>
              5 columns
            </button>
          </Row>
          <Row label="Sort by" id="sort">
            <Select id="sort" value="Default" italic />
          </Row>
          <Row label="Size" id="size">
            <Select id="size" value="Medium" />
          </Row>
          <Row label="Scroll limit" id="limit">
            <div className="flex h-8 min-w-0 flex-1 overflow-hidden rounded border border-[#4b4b4b]">
              <input
                id="limit"
                inputMode="numeric"
                defaultValue="8"
                className="min-w-0 flex-1 bg-[#080808] px-[11px] text-[13px] font-medium text-[#e0e0e0]"
              />
              <div className="flex w-6 flex-col border-l border-[#4b4b4b] text-[#b0b0b0]">
                <button type="button" aria-label="Increase" className="flex flex-1 items-center justify-center border-b border-[#4b4b4b]">
                  <ChevronIcon className="size-[10px] rotate-180" />
                </button>
                <button type="button" aria-label="Decrease" className="flex flex-1 items-center justify-center">
                  <ChevronIcon className="size-[10px]" />
                </button>
              </div>
            </div>
          </Row>
          <Row label="Paginate" id="paginate">
            <Checkbox id="paginate" checked />
          </Row>
          <Row label="Quiet" id="quiet">
            <Checkbox id="quiet" />
          </Row>
          <Row label="Compact" id="compact">
            <Checkbox id="compact" />
          </Row>
          <Row label="Row selection" id="selection">
            <Checkbox id="selection" />
          </Row>
          <p className="pl-[99px] text-[11px] leading-[15px] text-[#747474]">
            Row selection is only compatible with internal or SQL tables
          </p>
          <Row label="Filtering" id="filtering">
            <button type="button" id="filtering" className={OUTLINE_BUTTON}>
              No filters set
            </button>
          </Row>
          <Row label="Empty text" id="empty">
            <BindableInput id="empty" value="No rows found" />
          </Row>
          <Row label="Search fields" id="search">
            <Select id="search" value="(3) registration, manufacturer, model" />
          </Row>
          <p className="pl-[99px] text-[11px] leading-[15px] whitespace-nowrap text-[#747474]">Only the first 5 fields will be used</p>
        </div>
      </Section>
      <Section title="On row click" collapsible>
        <div className="flex flex-col pt-[6px] text-[13px] font-medium text-[#d0d0d0]">
          {["Run actions", "Show details side panel"].map((option, i) => (
            <label key={option} className="flex h-8 items-center gap-[10px]">
              <input
                type="radio"
                name="row-click"
                defaultChecked={i === 1}
                className="size-[14px] appearance-none rounded-full border-2 border-[#8a8a8a] checked:border-[5px] checked:border-[#0377e4]"
              />
              {option}
            </label>
          ))}
        </div>
        <p className="pt-2 text-[11px] leading-[15px] text-[#747474]">
          Details side panel is only compatible with internal or SQL tables
        </p>
        <div className="flex h-9 items-center justify-between pt-[10px] pr-[6px] text-[11px] text-[#a8a8a8]">
          Fields
          <Toggle label="All fields" />
        </div>
        <ul className="-mr-[2px] mt-[3px] rounded-t border border-[#4b4b4b] bg-[#080808]">
          {["registration", "manufacturer"].map((field) => (
            <li key={field} className="flex h-[33px] items-center border-b border-[#4b4b4b] pr-[7px] pl-[9px] text-[13px] font-medium text-[#d0d0d0]">
              <HandleIcon className="text-[#6a6a6a]" rows={4} />
              <button type="button" aria-label={`${field} settings`} className="pr-3 pl-[10px]">
                <GearIcon className="size-[14px]" />
              </button>
              <span className="flex-1">{field}</span>
              <Toggle label={field} />
            </li>
          ))}
        </ul>
      </Section>
    </aside>
  );
}

export default function App() {
  return (
    <div className="flex h-screen flex-col overflow-hidden bg-[#1a1a1a] font-['Noto_Sans_CJK_KR',sans-serif]">
      <TopBar />
      <div className="flex min-h-0 flex-1">
        <LeftPanel />
        <Canvas />
        <RightPanel />
      </div>
    </div>
  );
}
